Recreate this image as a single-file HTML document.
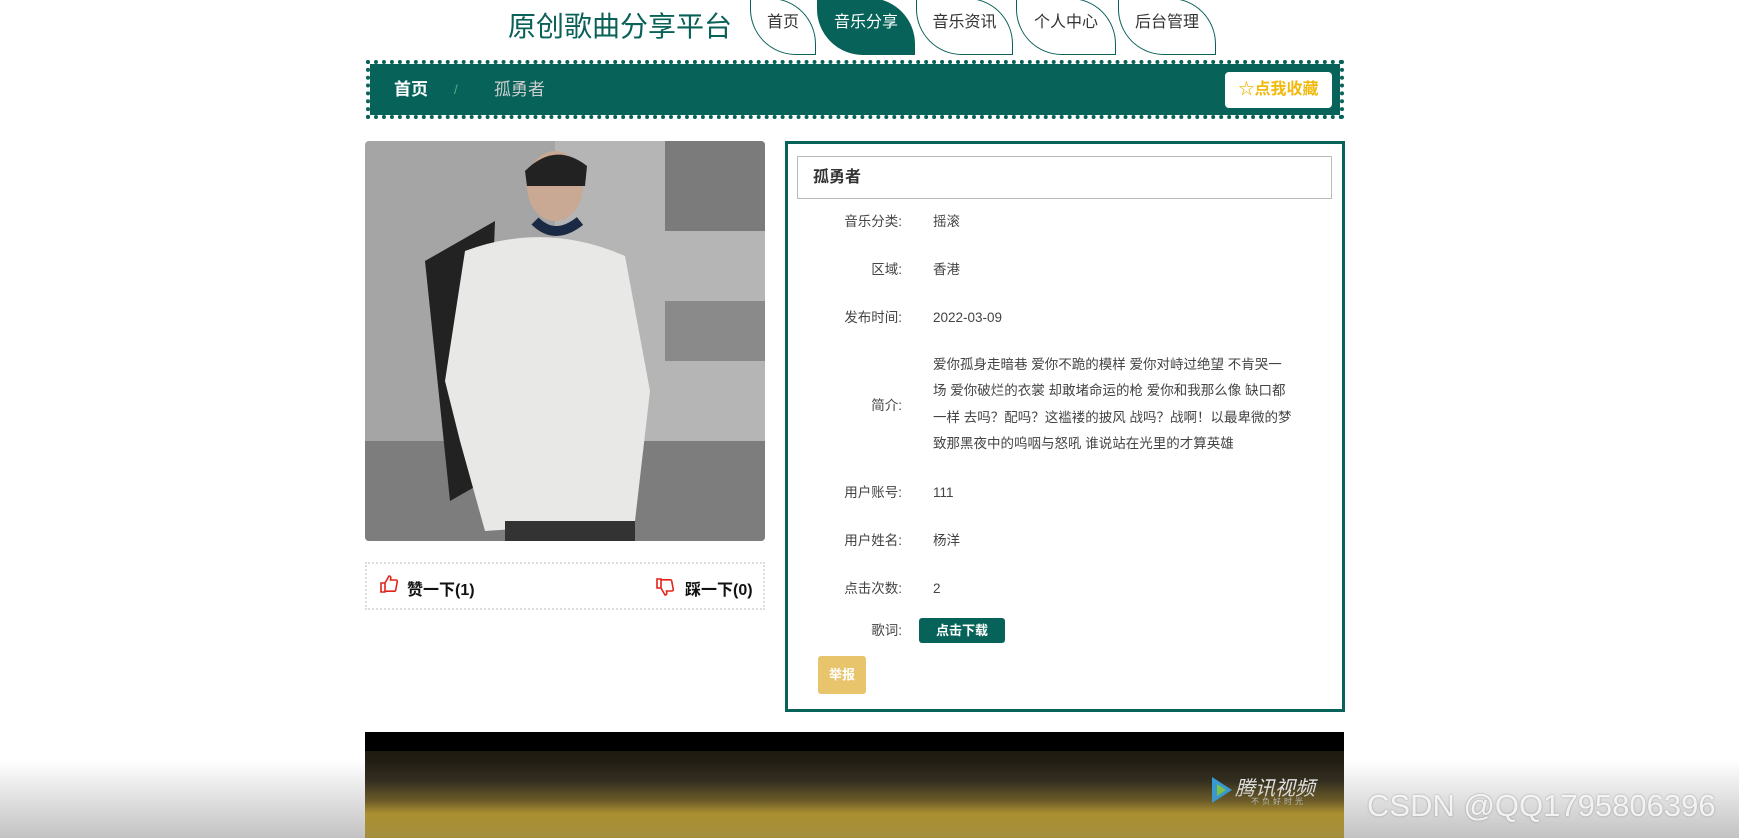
<!DOCTYPE html>
<html><head><meta charset="utf-8">
<style>
*{margin:0;padding:0;box-sizing:border-box}
body{width:1739px;height:838px;overflow:hidden;background:#fff;position:relative;font-family:"Liberation Sans","Noto Sans CJK SC",sans-serif;color:#333}
.abs{position:absolute}
.logo{left:508px;top:5px;font-size:28px;color:#0a6158;white-space:nowrap}
.tab{position:absolute;top:-2px;height:57px;border:1.5px solid #0a5f58;border-radius:0 46px 0 46px;font-size:16px;color:#333;text-align:center;line-height:48px;background:#fff}
.tab.act{background:#07635a;color:#fff}
.bar{left:366px;top:60px;width:978px;height:59px;background:#07635a;border:4px dotted #07635a;background-clip:padding-box}
.crumb{position:absolute;top:0;line-height:51px;font-size:17px}
.fav{position:absolute;right:8px;top:8px;width:107px;height:36px;background:#fff;border-radius:4px;color:#f0b90b;font-weight:bold;font-size:16px;text-align:center;line-height:36px}
.photo{left:365px;top:141px;width:400px;height:400px;border-radius:4px;overflow:hidden}
.like{left:365px;top:562px;width:400px;height:48px;border:2px dotted #ddd;font-size:16px;font-weight:bold;color:#111}
.panel{left:785px;top:141px;width:560px;height:571px;border:3px solid #07635a}
.ttl{position:absolute;left:9px;top:12px;width:535px;height:43px;border:1px solid #bbb;font-size:16px;font-weight:bold;line-height:41px;padding-left:15px;color:#333}
.lb{position:absolute;right:440px;font-size:13.5px;line-height:18px;color:#444;white-space:nowrap;text-align:right}
.vl{position:absolute;left:145px;font-size:13.5px;line-height:18px;color:#444;white-space:nowrap}
.intro{position:absolute;left:145px;top:208px;width:362px;font-size:13.5px;line-height:26.3px;color:#444}
.video{left:365px;top:732px;width:979px;height:106px;background:#000;overflow:hidden}
.shade{left:0;top:760px;width:1739px;height:78px;background:linear-gradient(rgba(120,120,120,0),rgba(120,120,120,.45))}
.csdn{left:1367px;top:788px;font-size:31px;color:rgba(255,255,255,.85);white-space:nowrap;text-shadow:0 0 2px rgba(0,0,0,.3)}
</style></head><body>
<div class="abs logo">原创歌曲分享平台</div>
<div class="tab" style="left:750px;width:66px">首页</div>
<div class="tab act" style="left:817px;width:98px">音乐分享</div>
<div class="tab" style="left:916px;width:97px">音乐资讯</div>
<div class="tab" style="left:1016px;width:100px">个人中心</div>
<div class="tab" style="left:1118px;width:98px">后台管理</div>

<div class="abs bar">
 <span class="crumb" style="left:24px;color:#fff;font-weight:bold">首页</span>
 <span class="crumb" style="left:84px;color:#8fb;opacity:.5;font-size:13px">/</span>
 <span class="crumb" style="left:124px;color:#ccc">孤勇者</span>
 <div class="fav">☆点我收藏</div>
</div>

<div class="abs photo">
 <svg width="400" height="400">
  <rect x="0" y="0" width="400" height="400" fill="#a5a5a5"/>
  <rect x="190" y="0" width="210" height="400" fill="#b5b5b5"/>
  <rect x="300" y="0" width="100" height="90" fill="#7b7b7b"/>
  <rect x="300" y="160" width="100" height="60" fill="#8a8a8a"/>
  <rect x="0" y="300" width="400" height="100" fill="#7d7d7d"/>
  <path d="M130 80 L60 120 L85 360 L120 340 Z" fill="#222"/>
  <path d="M100 110 Q180 80 260 115 L285 250 L270 380 L120 390 L95 300 L80 240 Z" fill="#e8e8e6"/>
  <rect x="140" y="380" width="130" height="20" fill="#333"/>
  <ellipse cx="190" cy="45" rx="28" ry="35" fill="#c9a894"/>
  <path d="M160 30 Q190 0 222 25 L220 45 L162 45 Z" fill="#222"/>
  <path d="M170 80 Q190 100 215 80" stroke="#1b2a44" stroke-width="10" fill="none"/>
 </svg>
</div>

<div class="abs like">
 <svg class="abs" style="left:12px;top:10px" width="20" height="20" viewBox="0 0 20 20"><path d="M2 9h4v9H2zM6 9l4-7c2 0 2 2 1.5 4H17c1 0 1.5 1 1.2 2l-1.5 8c-.2.8-.8 1.2-1.5 1.2H6" fill="none" stroke="#e2231a" stroke-width="1.6"/></svg>
 <span class="abs" style="left:40px;top:12px">赞一下(1)</span>
 <svg class="abs" style="left:288px;top:13px" width="20" height="20" viewBox="0 0 20 20"><path d="M2 2h4v9H2zM6 11l4 7c2 0 2-2 1.5-4H17c1 0 1.5-1 1.2-2l-1.5-8c-.2-.8-.8-1.2-1.5-1.2H6" fill="none" stroke="#e2231a" stroke-width="1.6"/></svg>
 <span class="abs" style="left:318px;top:12px">踩一下(0)</span>
</div>

<div class="abs panel">
 <div class="ttl">孤勇者</div>
 <span class="lb" style="top:69px">音乐分类:</span><span class="vl" style="top:69px">摇滚</span>
 <span class="lb" style="top:117px">区域:</span><span class="vl" style="top:117px">香港</span>
 <span class="lb" style="top:165px">发布时间:</span><span class="vl" style="top:165px">2022-03-09</span>
 <span class="lb" style="top:253px">简介:</span>
 <div class="intro">爱你孤身走暗巷 爱你不跪的模样 爱你对峙过绝望 不肯哭一场 爱你破烂的衣裳 却敢堵命运的枪 爱你和我那么像 缺口都一样 去吗？配吗？这褴褛的披风 战吗？战啊！以最卑微的梦 致那黑夜中的呜咽与怒吼 谁说站在光里的才算英雄</div>
 <span class="lb" style="top:340px">用户账号:</span><span class="vl" style="top:340px">111</span>
 <span class="lb" style="top:388px">用户姓名:</span><span class="vl" style="top:388px">杨洋</span>
 <span class="lb" style="top:436px">点击次数:</span><span class="vl" style="top:436px">2</span>
 <span class="lb" style="top:478px">歌词:</span>
 <div class="abs" style="left:131px;top:474px;width:86px;height:25px;background:#07635a;color:#fff;border-radius:3px;font-size:13px;font-weight:bold;text-align:center;line-height:25px">点击下载</div>
 <div class="abs" style="left:30px;top:512px;width:48px;height:38px;background:#e8c46c;color:#fff;border-radius:3px;font-size:13px;font-weight:bold;text-align:center;line-height:38px">举报</div>
</div>

<div class="abs video">
 <div class="abs" style="left:0;top:19px;width:979px;height:87px;background:linear-gradient(#1e1a12 0%,#2a2414 35%,#6a5410 58%,#c09a10 72%,#c8a010 100%)"></div>
 <svg class="abs" style="left:845px;top:43px" width="24" height="30" viewBox="0 0 24 30"><path d="M2 2 L22 15 L2 28 Z" fill="#2aa0e0"/><path d="M7 9 L16 15 L7 21 Z" fill="#7fd040"/></svg>
 <span class="abs" style="left:870px;top:40px;color:#eee;font-size:20px;font-style:italic">腾讯视频</span>
 <span class="abs" style="left:886px;top:64px;color:#ccc;font-size:8px;letter-spacing:3px">不负好时光</span>
</div>
<div class="abs shade"></div>
<div class="abs csdn">CSDN @QQ1795806396</div>
</body></html>
